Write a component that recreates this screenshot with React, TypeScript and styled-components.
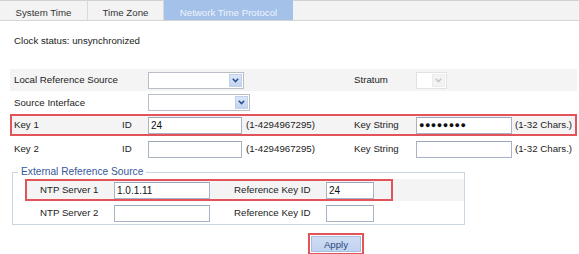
import React from 'react';
import styled, { createGlobalStyle, css } from 'styled-components';

const GlobalStyle = createGlobalStyle`
  html, body {
    margin: 0;
    padding: 0;
    background: #fff;
  }
  body {
    font-family: "Liberation Sans", Arial, sans-serif;
    font-size: 9.7px;
    color: #222;
  }
`

const Page = styled.div`
  width: 579px;
  height: 254px;
  overflow: hidden;
`

// tabs
const TabBar = styled.div`
  display: flex;
  height: 21px;
  box-sizing: border-box;
  border-bottom: 1px solid #d6d6d6;
  background: #f3f3f3;
`

const Tab = styled.div<{ $width: number; $active?: boolean }>`
  width: ${p => p.$width}px;
  box-sizing: border-box;
  display: flex;
  justify-content: center;
  align-items: center;
  padding-top: 4px;
  color: #333;
  border-top: 1px solid #d2d2d2;
  border-right: 1px solid #dadada;
  ${p => p.$active && css`
    background: #a4c1e9;
    color: #eef4fc;
    border-top-color: #a4c1e9;
    border-right: none;
  `}
`

const TabFiller = styled.div`
  flex: 1;
  border-top: 1px solid #d2d2d2;
`

const Status = styled.div`
  padding: 13px 0 0 14px;
  line-height: 14px;
  height: 14px;
`

// form rows
const Form = styled.div`
  display: flex;
  flex-direction: column;
  padding: 21px 2px 0 10px;
`

const Row = styled.div<{ $shade?: boolean; $marked?: boolean; $height?: number }>`
  display: grid;
  grid-template-columns: 108px 26px 98px 108px 62px 99px 1fr;
  align-items: center;
  height: ${p => p.$height ?? 22}px;
  padding-left: 4px;
  background: ${p => (p.$shade ? '#f4f4f4' : 'transparent')};
  ${p => p.$marked && css`box-shadow: inset 0 0 0 2px #e2545a;`}
`

const Label = styled.span<{ $col: number; $span?: number }>`
  grid-column: ${p => p.$col} / span ${p => p.$span ?? 1};
  white-space: nowrap;
  line-height: 14px;
`

const Field = styled.input<{ $width: number }>`
  box-sizing: border-box;
  width: ${p => p.$width}px;
  height: 17px;
  margin: 0;
  padding: 0 2px;
  border: 1px solid #a7b4c6;
  border-top-color: #9aa7ba;
  background: #fff;
  font-family: "Liberation Sans", Arial, sans-serif;
  font-size: 10px;
  color: #111;
  outline: none;
`

const SecretField = styled(Field)`
  font-size: 9px;
  letter-spacing: 0.5px;
`

const SelectBox = styled.div<{ $width: number; $disabled?: boolean }>`
  box-sizing: border-box;
  width: ${p => p.$width}px;
  height: 17px;
  display: flex;
  justify-content: flex-end;
  padding: 1px;
  border: 1px solid ${p => (p.$disabled ? '#e2e2e2' : '#b9bec6')};
  background: #fff;
`

const SelectArrow = styled.div<{ $disabled?: boolean }>`
  width: 13px;
  display: flex;
  align-items: center;
  justify-content: center;
  background: ${p => (p.$disabled ? '#f3f3f3' : 'linear-gradient(#dbe6f7, #c2d4ef)')};
  border: 1px solid ${p => (p.$disabled ? '#ececec' : '#bfd0ea')};
  box-sizing: border-box;
`

const Select = ({ width, disabled }: { width: number; disabled?: boolean }) => (
  <SelectBox $width={width} $disabled={disabled}>
    <SelectArrow $disabled={disabled}>
      <svg width="7" height="5" viewBox="0 0 7 5">
        <path
          d="M0.8 0.8 L3.5 3.6 L6.2 0.8"
          fill="none"
          stroke={disabled ? '#c4c4c4' : '#2b4f8e'}
          strokeWidth="1.5"
        />
      </svg>
    </SelectArrow>
  </SelectBox>
)

// external reference source
const Group = styled.fieldset`
  margin: 3px 0 0 2px;
  width: 453px;
  box-sizing: border-box;
  padding: 0 0 0 12px;
  border: 1px solid #cbd6e3;
  min-width: 0;
`

const GroupTitle = styled.legend`
  margin-left: -7px;
  padding: 0 3px;
  line-height: 14px;
  color: #34589a;
  font-size: 10.2px;
`

const ServerRows = styled.div`
  display: flex;
  flex-direction: column;
  gap: 1px;
`

const ServerRow = styled.div<{ $shade?: boolean }>`
  display: flex;
  height: 22px;
  background: ${p => (p.$shade ? '#f4f4f4' : 'transparent')};
`

const ServerCells = styled.div<{ $marked?: boolean }>`
  display: grid;
  grid-template-columns: 74px 120px 92px 60px;
  align-items: center;
  width: 368px;
  box-sizing: border-box;
  padding-left: 15px;
  ${p => p.$marked && css`box-shadow: inset 0 0 0 2px #e2545a;`}
`

const CellText = styled.span`
  white-space: nowrap;
  line-height: 14px;
`

// apply
const ApplyRow = styled.div`
  padding: 8px 0 0 308px;
`

const ApplyFrame = styled.div`
  display: inline-block;
  border: 2px solid #e2545a;
  padding: 1px;
`

const ApplyButton = styled.button`
  display: block;
  width: 50px;
  height: 16px;
  margin: 0;
  padding: 0;
  border: 1px solid #a9bedf;
  background: linear-gradient(#cfddf3, #bfd2ee);
  color: #2a4a84;
  font-family: "Liberation Sans", Arial, sans-serif;
  font-size: 9.7px;
`

export default function App() {
  return (
    <Page>
      <GlobalStyle />
      <TabBar>
        <Tab $width={88}>System Time</Tab>
        <Tab $width={76}>Time Zone</Tab>
        <Tab $width={129} $active>Network Time Protocol</Tab>
        <TabFiller />
      </TabBar>
      <Status>Clock status: unsynchronized</Status>
      <Form>
        <Row $shade>
          <Label $col={1} $span={2}>Local Reference Source</Label>
          <Select width={96} />
          <Label $col={5}>Stratum</Label>
          <Select width={31} disabled />
        </Row>
        <Row $height={23}>
          <Label $col={1} $span={2}>Source Interface</Label>
          <Select width={102} />
        </Row>
        <Row $shade $marked>
          <Label $col={1}>Key 1</Label>
          <Label $col={2}>ID</Label>
          <Field $width={94} defaultValue="24" />
          <Label $col={4}>(1-4294967295)</Label>
          <Label $col={5}>Key String</Label>
          <SecretField $width={96} defaultValue={'\u25CF\u25CF\u25CF\u25CF\u25CF\u25CF\u25CF\u25CF'} />
          <Label $col={7}>(1-32 Chars.)</Label>
        </Row>
        <Row $height={26}>
          <Label $col={1}>Key 2</Label>
          <Label $col={2}>ID</Label>
          <Field $width={94} />
          <Label $col={4}>(1-4294967295)</Label>
          <Label $col={5}>Key String</Label>
          <Field $width={96} />
          <Label $col={7}>(1-32 Chars.)</Label>
        </Row>
        <Group>
          <GroupTitle>External Reference Source</GroupTitle>
          <ServerRows>
            <ServerRow $shade>
              <ServerCells $marked>
                <CellText>NTP Server 1</CellText>
                <Field $width={96} defaultValue="1.0.1.11" />
                <CellText>Reference Key ID</CellText>
                <Field $width={48} defaultValue="24" />
              </ServerCells>
            </ServerRow>
            <ServerRow>
              <ServerCells>
                <CellText>NTP Server 2</CellText>
                <Field $width={96} />
                <CellText>Reference Key ID</CellText>
                <Field $width={48} />
              </ServerCells>
            </ServerRow>
          </ServerRows>
        </Group>
      </Form>
      <ApplyRow>
        <ApplyFrame>
          <ApplyButton>Apply</ApplyButton>
        </ApplyFrame>
      </ApplyRow>
    </Page>
  );
}
